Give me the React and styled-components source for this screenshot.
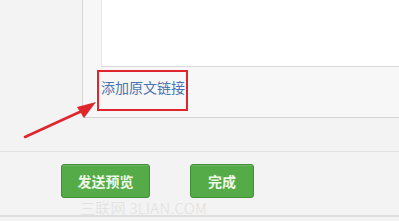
import React from "react";
import styled, { createGlobalStyle } from "styled-components";

const GlobalStyle = createGlobalStyle`
  html, body { margin: 0; padding: 0; }
  body {
    width: 399px;
    height: 221px;
    overflow: hidden;
    background: #f2f2f2;
    font-family: "Noto Sans CJK SC", "Liberation Sans", sans-serif;
  }
`;

const Page = styled.div`
  position: relative;
  width: 399px;
  height: 221px;
  display: flex;
  flex-direction: column;
  background: #f3f3f3;
`;

const Top = styled.div`
  display: flex;
  height: 151px;
  border-bottom: 1px solid #e2e2e2;
`;

const Side = styled.div`
  width: 82px;
  flex-shrink: 0;
`;

const Panel = styled.div`
  flex: 1;
  height: 118px;
  box-sizing: border-box;
  background: #f7f7f7;
  border-left: 1px solid #d6d6d6;
  border-bottom: 1px solid #d6d6d6;
  border-bottom-left-radius: 3px;
  display: flex;
  flex-direction: column;
  padding-left: 18px;
`;

const Editor = styled.div`
  height: 66px;
  background: #fff;
  border-left: 1px solid #e6e6e6;
  border-bottom: 1px solid #d9d9d9;
`;

const LinkRow = styled.div`
  padding: 3px 0 0 0;
  margin-left: -4px;
`;

const Highlight = styled.div`
  display: inline-flex;
  align-items: flex-start;
  width: 91px;
  height: 41px;
  box-sizing: border-box;
  border: 2px solid #e0262c;
  padding: 6px 0 0 2px;
`;

const LinkText = styled.a`
  font-size: 14px;
  line-height: 18px;
  color: #4a74b4;
  text-decoration: none;
  white-space: nowrap;
`;

const Footer = styled.div`
  height: 65px;
  display: flex;
  align-items: flex-start;
  gap: 40px;
  padding: 12px 0 0 61px;
  box-sizing: border-box;
  border-bottom: 2px solid #dedede;
  position: relative;
`;

const Button = styled.button`
  width: ${(p) => p.$w}px;
  height: 34px;
  box-sizing: border-box;
  background: #55ab47;
  border: 1px solid #3f8f35;
  border-radius: 3px;
  color: #eef8e6;
  font-family: "Noto Sans CJK SC", sans-serif;
  font-size: 14px;
  font-weight: 700;
  padding: 0;
  box-shadow: inset 0 1px 0 rgba(255, 255, 255, 0.15);
`;

const Watermark = styled.div`
  position: absolute;
  left: 80px;
  top: 47px;
  font-family: "Noto Sans CJK SC", "Liberation Sans", sans-serif;
  font-size: 15px;
  font-weight: 300;
  line-height: 18px;
  color: #e0e0e0;
  letter-spacing: 0.3px;
  white-space: nowrap;
`;

const Arrow = styled.svg`
  position: absolute;
  left: 0;
  top: 0;
  pointer-events: none;
`;

export default function App() {
  return (
    <>
      <GlobalStyle />
      <Page>
        <Top>
          <Side />
          <Panel>
            <Editor />
            <LinkRow>
              <Highlight>
                <LinkText>添加原文链接</LinkText>
              </Highlight>
            </LinkRow>
          </Panel>
        </Top>
        <Footer>
          <Button $w={89}>发送预览</Button>
          <Button $w={64}>完成</Button>
          <Watermark>三联网 3LIAN.COM</Watermark>
        </Footer>
        <Arrow width="399" height="221" viewBox="0 0 399 221">
          <line x1="25" y1="137" x2="84" y2="110" stroke="#e0262c" strokeWidth="2.5" strokeLinecap="round" />
          <polygon points="96,102 77,107 84,118" fill="#e0262c" />
        </Arrow>
      </Page>
    </>
  );
}
